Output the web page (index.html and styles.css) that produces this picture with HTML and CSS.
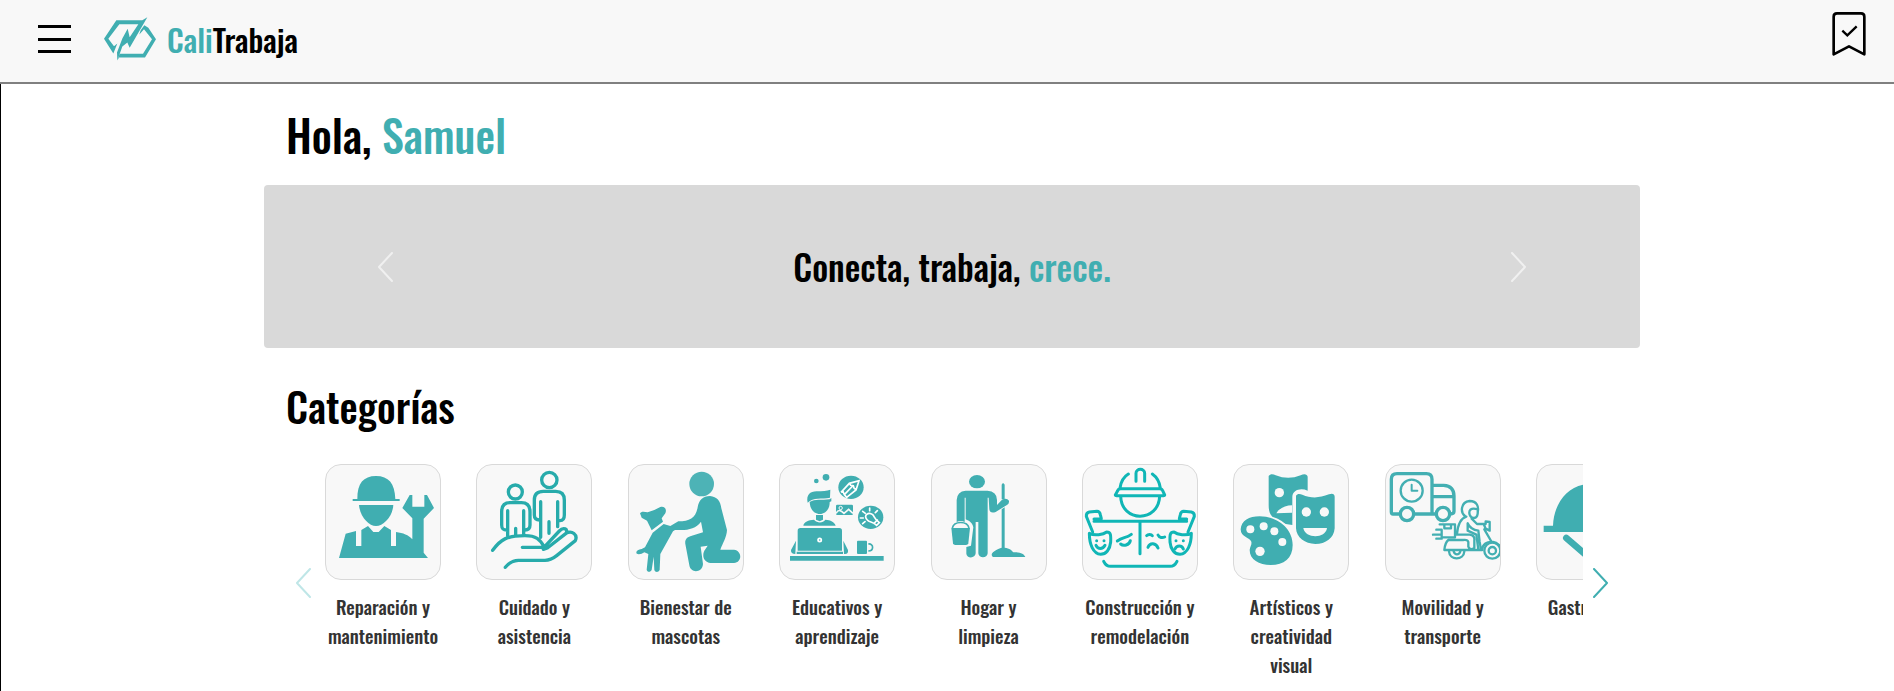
FILE: index.html
```
<!DOCTYPE html>
<html lang="es">
<head>
<meta charset="utf-8">
<meta name="viewport" content="width=device-width, initial-scale=1">
<title>CaliTrabaja</title>
<link rel="stylesheet" href="styles.css">
</head>
<body>
<header class="topbar">
  <button class="menu-btn" type="button" aria-label="Abrir menú"><span class="menu-line"></span><span class="menu-line"></span><span class="menu-line"></span></button>
  <a class="brand" href="#">
    <svg class="brand-mark" viewBox="27 36 156 131" aria-hidden="true">
      <path d="M157 36L104 128L97 112L82 124L67 166L66 142L82 100L98 71L104 96L130 57H73L40 101L57 123L67 115L55 145L27 101L64 45H142Z"/>
      <path d="M67 166L74 146H144L171 102L147 72L133 88L137 75L148 60L160 68L183 102L150 157H72Z"/>
    </svg>
    <span class="brand-name"><span class="accent">Cali</span>Trabaja</span>
  </a>
  <a class="saved" href="#" aria-label="Guardados">
    <svg class="saved-icon" viewBox="156 36 102 132" fill="none" stroke="#000" stroke-width="8" aria-hidden="true">
      <path d="M161 163V50Q161 40 171 40H243Q253 40 253 50V163L207 139Z" stroke-linejoin="round"/>
      <path d="M187 92L202 106L230 79" stroke-width="7"/>
    </svg>
  </a>
</header>

<main class="page">
  <div class="content">
    <h1 class="greeting">Hola, <span class="accent">Samuel</span></h1>

    <section class="hero" aria-label="Destacados">
      <button class="arrow arrow-light" type="button" aria-label="Anterior"><svg viewBox="0 0 16 30"><path d="M15 1L2 15L15 29"/></svg></button>
      <p class="hero-text">Conecta, trabaja, <span class="accent">crece.</span></p>
      <button class="arrow arrow-light" type="button" aria-label="Siguiente"><svg viewBox="0 0 16 30"><path d="M1 1L14 15L1 29"/></svg></button>
    </section>

    <h2 class="section-title">Categorías</h2>

    <div class="carousel">
      <button class="arrow arrow-off" type="button" aria-label="Categorías anteriores"><svg viewBox="0 0 16 30"><path d="M15 1L2 15L15 29"/></svg></button>
      <ul class="slides">
        <li class="slide"><a class="category" href="#">
          <span class="tile"><svg viewBox="135 42 348 348" aria-hidden="true">
            <path d="M218 153V147H232C232 100 250 78 288 78C326 78 344 100 346 147H359V153Z"/>
            <path d="M237 165H340C338 200 310 228 288 228C266 228 240 200 237 165Z"/>
            <path d="M177 324L197 251L228 243V288H244V240L264 228L280 246H296L313 228L333 240V288H348V246C370 249 385 255 397 268V205L367 174L389 135H397V170H433V135H441L462 174L431 206V308L444 324Z"/>
          </svg></span>
          <span class="label">Reparación y mantenimiento</span></a></li>
        <li class="slide"><a class="category" href="#">
          <span class="tile"><svg class="outline" viewBox="588 42 348 348" stroke="#27abab" stroke-width="10" aria-hidden="true">
            <circle cx="706" cy="126" r="21"/><circle cx="808" cy="90" r="23"/>
            <path d="M681 240C668 240 665 236 665 225V185Q665 158 690 158H724Q750 158 750 185V225Q750 240 735 240M683 182V258M731 182V252M707 235V255"/>
            <path d="M779 210Q763 210 763 195V150Q763 124 790 124H827Q853 124 853 150V195Q853 212 840 212M782 155V262M833 155V230M807 215V250"/>
            <path d="M638 301C662 268 680 257 735 257C768 257 780 268 792 290M727 292H792L838 243C850 230 866 237 858 250M858 250L802 294L790 298L792 288M858 250C876 240 894 254 886 272L830 317Q812 331 795 331H715Q692 332 676 352"/>
          </svg></span>
          <span class="label">Cuidado y asistencia</span></a></li>
        <li class="slide"><a class="category" href="#">
          <span class="tile"><svg viewBox="81 42 348 348" aria-hidden="true">
            <circle cx="302" cy="102" r="37" fill="#4db3b6"/>
            <path d="M327 138C348 140 358 152 361 175L378 240C377 262 365 280 358 299H399C424 302 424 337 399 339H329C305 337 302 312 313 298L320 287L299 290L306 342C304 370 268 370 265 346L253 282C251 268 258 262 270 258L306 247L300 215C285 235 262 241 235 240L222 240L216 244L178 312L176 360C172 368 162 367 160 360L158 320L152 360C148 368 138 366 137 359L142 312L130 307C122 312 112 316 106 310C105 302 112 299 122 297L132 292L155 248L188 222L208 228L232 214C266 214 284 205 290 172C294 150 305 138 327 138Z"/>
            <path d="M117 190C120 184 128 184 140 187L160 180L178 171C192 168 198 178 193 190L182 205L186 215L152 241L138 212L122 203Z"/>
          </svg></span>
          <span class="label">Bienestar de mascotas</span></a></li>
        <li class="slide"><a class="category" href="#">
          <span class="tile"><svg viewBox="537 42 348 348" aria-hidden="true">
            <circle cx="649" cy="93" r="7"/><circle cx="678" cy="82" r="10"/>
            <path d="M623 158C618 135 630 124 650 124C668 124 680 122 691 119L690 143C665 148 640 140 623 158Z"/>
            <path d="M629 156C645 146 665 152 689 148L694 144V154L689 156C690 178 675 192 660 192C642 192 630 178 629 156Z"/>
            <path d="M648 195H669V209L659 214L648 209Z"/>
            <path d="M610 227C612 215 625 210 642 209C652 220 668 220 676 209C692 210 703 215 707 227Z"/>
            <path d="M601 234H718Q726 234 726 242V302H593V242Q593 234 601 234ZM590 305H729V312H590ZM588 272L573 300Q572 312 586 312ZM730 272L744 300Q746 314 732 312ZM570 318H851V332H570ZM774 272H798Q801 272 801 275V309Q801 312 798 312H774Q771 312 771 309V275Q771 272 774 272Z"/>
            <path d="M805 282C822 280 822 302 805 303" fill="none" stroke="#40aeb1" stroke-width="5"/>
            <circle cx="659" cy="270" r="5" fill="none" stroke="#fff" stroke-width="5"/>
            <ellipse cx="753" cy="112" rx="38" ry="35"/>
            <path d="M723 127L748 100L777 92L768 120L740 142M733 134L758 108M748 100L752 106L760 107L762 114L768 120M728 122L733 134L740 142" fill="none" stroke="#fff" stroke-width="5"/>
            <path d="M712 164H755Q759 164 759 168V191Q759 195 755 195H712Q708 195 708 191V168Q708 164 712 164Z"/>
            <path d="M708 190C716 176 724 182 732 190L746 178L759 190" fill="none" stroke="#f8f8f8" stroke-width="5"/><circle cx="722" cy="174" r="5" fill="none" stroke="#f8f8f8" stroke-width="3"/>
            <ellipse cx="812" cy="202" rx="38" ry="35"/>
            <path d="M802 210C788 196 806 184 818 194C824 200 822 206 838 218L830 226C818 214 808 218 802 210ZM822 220L832 210M781 204H790M788 184L796 190M809 174V182M832 182L826 188M788 221L795 215" fill="none" stroke="#fff" stroke-width="5" stroke-linecap="round"/>
          </svg></span>
          <span class="label">Educativos y aprendizaje</span></a></li>
        <li class="slide"><a class="category" href="#">
          <span class="tile"><svg viewBox="61 42 348 348" aria-hidden="true">
            <ellipse cx="199" cy="95" rx="24" ry="20"/>
            <path d="M165 122H230Q259 124 259 150V165L274 149Q288 143 295 152Q296 160 290 164L255 186Q238 192 236 178L234 143H231V310C230 326 204 326 203 310V216H195V310C194 326 168 326 167 311V291L181 287L188 232C186 219 176 213 165 208V143H162V216C154 212 146 212 138 216V150Q139 124 165 122Z"/>
            <path d="M122 234H178L173 280Q172 285 166 285H134Q128 285 127 280Z"/>
            <path d="M125 234C130 212 170 212 175 234" fill="none" stroke="#40aeb1" stroke-width="5"/>
            <path d="M273 104Q277 96 282 104V148H273ZM273 178L282 172V293C297 295 304 301 308 307C330 306 340 312 344 321H247Q239 314 247 307C255 300 264 296 273 293Z"/>
          </svg></span>
          <span class="label">Hogar y limpieza</span></a></li>
        <li class="slide"><a class="category" href="#">
          <span class="tile"><svg class="outline" viewBox="18 28 348 348" stroke="#10b6b6" stroke-width="9" aria-hidden="true">
            <path d="M132 100C135 80 145 65 157 58M229 58C242 67 250 80 253 100M180 80V56C180 40 206 40 206 56V80M134 102H251Q258 102 260 108L266 121Q266 123 262 123H122Q118 123 118 121L125 108Q127 102 134 102ZM134 124C136 205 248 205 251 124"/>
            <path d="M54 193H75M311 193H332M54 200H332M50 232L31 185Q30 174 40 172L63 170Q71 170 73 180L76 192M336 232L355 185Q356 174 346 172L323 170Q315 170 313 180L310 192M192 200V297"/>
            <path d="M40 236C55 244 82 240 92 232C104 232 105 240 104 262C102 285 90 299 74 299C52 297 40 270 40 236ZM346 236C331 244 304 240 294 232C282 232 281 240 282 262C284 285 296 299 312 299C334 297 346 270 346 236Z"/>
            <path d="M60 272C66 285 80 285 87 272M297 283C302 271 318 271 322 283M124 259C140 247 150 251 166 239M134 268C142 275 160 272 163 258M212 243C216 238 226 238 229 243M246 241C250 250 260 250 266 247M216 278C222 262 240 264 246 280"/>
            <path d="M62 258V258M84 258V258M300 258V258M322 258V258"/>
            <path d="M83 320Q90 335 104 335H282Q296 335 303 320"/>
          </svg></span>
          <span class="label">Construcción y remodelación</span></a></li>
        <li class="slide"><a class="category" href="#">
          <span class="tile"><svg viewBox="67 42 348 348" aria-hidden="true">
            <path d="M174 78C180 70 188 73 195 76C220 86 245 86 270 76C280 70 290 72 291 80V122C270 112 246 120 245 140V225L225 222C208 208 195 203 185 200C176 190 174 180 174 165Z"/>
            <path d="M256 137C260 130 268 131 275 134C300 145 325 145 355 133C364 129 372 131 372 140V235C370 265 345 282 314 282C283 282 257 262 256 235Z"/>
            <path d="M147 199C200 199 246 235 246 285C246 325 220 345 180 345C145 344 117 330 117 300C118 290 124 285 122 275C118 262 90 262 90 238C92 212 115 199 147 199Z"/>
            <g fill="#f8f8f8"><circle cx="206" cy="128" r="14"/><path d="M197 190C205 175 225 166 244 166V188Z"/><circle cx="287" cy="186" r="14"/><circle cx="341" cy="186" r="14"/><path d="M278 234H349C345 267 283 267 278 234Z"/><circle cx="119" cy="238" r="12"/><circle cx="159" cy="229" r="12"/><circle cx="191" cy="244" r="12"/><circle cx="215" cy="276" r="12"/><circle cx="148" cy="304" r="14"/></g>
          </svg></span>
          <span class="label">Artísticos y creatividad visual</span></a></li>
        <li class="slide"><a class="category" href="#">
          <span class="tile"><svg class="outline" viewBox="42 28 348 348" stroke="#43afb2" stroke-width="10" aria-hidden="true">
            <path d="M84 178H66Q61 178 61 172V74Q61 57 78 57H166Q183 57 183 74V178H132M183 92H218Q249 94 249 124V170Q249 178 238 178M186 126H248M192 178H184"/>
            <circle cx="108" cy="178" r="20"/><circle cx="216" cy="178" r="20"/>
            <circle cx="122" cy="108" r="33" stroke-width="7"/><path d="M122 90V108H139" stroke-width="6"/>
            <g stroke-width="7"><path d="M282 184C268 174 268 142 296 139C318 139 324 156 320 172M296 180C292 166 300 158 320 164C322 180 318 190 308 190C300 190 298 186 296 180ZM286 186C266 192 260 216 258 238M290 206C296 220 304 226 322 228M302 192L318 208H344V200L356 202V228L344 222L338 208M322 228L326 262L330 285M340 224L362 262M206 209H252M220 211V221H240V211M196 225H212V248H252V212M186 240H212M196 252H212M258 240H296Q312 242 310 258V280Q296 288 292 276V262Q290 254 276 256H232Q222 264 220 286H334C334 268 348 260 366 262C378 264 384 270 390 276M290 206V228L316 240L322 285"/>
            <path d="M234 290C236 318 278 318 280 290M248 290C252 302 264 302 268 290"/><circle cx="364" cy="288" r="24"/><circle cx="364" cy="288" r="11"/></g>
          </svg></span>
          <span class="label">Movilidad y transporte</span></a></li>
        <li class="slide"><a class="category" href="#">
          <span class="tile"><svg viewBox="976 42 348 348" aria-hidden="true">
            <path d="M999 246V227H1027C1029 160 1072 104 1134 102V92H1166V102C1228 104 1271 160 1273 227H1301V246Z"/>
            <path d="M1067 264L1130 318M1233 264L1170 318" fill="none" stroke="#40aeb1" stroke-width="20" stroke-linecap="round"/>
          </svg></span>
          <span class="label">Gastronomía</span></a></li>
      </ul>
      <button class="arrow arrow-on" type="button" aria-label="Más categorías"><svg viewBox="0 0 16 30"><path d="M1 1L14 15L1 29"/></svg></button>
    </div>
  </div>
</main>
</body>
</html>
```
FILE: styles.css
```
* { box-sizing: border-box; }

html { scrollbar-width: none; }

body {
  margin: 0;
  background: #fff;
  color: #000;
  font-family: Oswald, "Roboto Condensed", "Liberation Sans", sans-serif;
  font-weight: 500;
}

a { color: inherit; text-decoration: none; }

button {
  padding: 0;
  border: 0;
  background: none;
  cursor: pointer;
}

svg { display: block; }

.accent { color: #40aeb1; }

.topbar {
  display: flex;
  align-items: flex-start;
  height: 84px;
  padding: 0 28px 0 38px;
  background: #f8f8f8;
  border-bottom: 2px solid #808080;
}

.menu-btn {
  display: flex;
  flex-direction: column;
  justify-content: space-between;
  width: 33px;
  height: 28px;
  margin-top: 25px;
}

.menu-line {
  width: 100%;
  height: 3px;
  background: #000;
}

.brand {
  display: flex;
  align-items: center;
  gap: 11px;
  height: 78px;
  margin-left: 33px;
}

.brand-mark {
  width: 52px;
  height: 44px;
  fill: #40aeb1;
}

.brand-name {
  font-size: 31px;
  line-height: 48px;
}

.saved {
  margin: 12px 0 0 auto;
}

.saved-icon {
  width: 34px;
  height: 44px;
}

.page {
  min-height: calc(100vh - 84px);
  padding: 23px 0 0 9px;
  border-left: 1px solid #000;
  overflow: hidden;
}

.content {
  max-width: 1376px;
  margin: 0 auto;
}

.greeting,
.section-title {
  margin: 0;
  padding-left: 22px;
  font-weight: 500;
}

.greeting {
  font-size: 44px;
  line-height: 56px;
}

.hero {
  display: flex;
  align-items: center;
  justify-content: space-between;
  height: 163px;
  margin-top: 22px;
  padding: 0 113px;
  background: #d9d9d9;
  border-radius: 4px;
}

.hero-text {
  margin: 0;
  padding-bottom: 2px;
  font-size: 35px;
  line-height: 56px;
}

.section-title {
  margin-top: 30px;
  font-size: 41px;
  line-height: 56px;
}

.carousel {
  display: flex;
  align-items: center;
  gap: 14px;
  margin-top: 30px;
  padding: 0 31px;
}

.arrow {
  flex: none;
  width: 16px;
  height: 30px;
}

.arrow svg {
  width: 16px;
  height: 30px;
  fill: none;
  stroke: currentColor;
  stroke-width: 2;
  stroke-linecap: round;
  stroke-linejoin: round;
}

.arrow-light { color: #f0f0f0; }
.arrow-off { color: #bfe6e7; }
.arrow-on { color: #40aeb1; margin-left: -4px; }

.slides {
  display: flex;
  flex: 1;
  min-width: 0;
  height: 237px;
  margin: 0;
  padding: 0;
  overflow: hidden;
  list-style: none;
}

.slide { flex: 0 0 calc(100% / 8.31); }

.category {
  display: flex;
  flex-direction: column;
  gap: 12px;
  width: 116px;
  color: #333;
  font-size: 20px;
  line-height: 29px;
  text-align: center;
}

.label { font-size: 19px; }

.tile {
  height: 116px;
  background: #f8f8f8;
  border: 1px solid #d9d9d9;
  border-radius: 16px;
  overflow: hidden;
}

.tile svg {
  width: 116px;
  height: 116px;
  margin: -1px;
  fill: #40aeb1;
}

.tile .outline {
  fill: none;
  stroke-linecap: round;
  stroke-linejoin: round;
}
```
